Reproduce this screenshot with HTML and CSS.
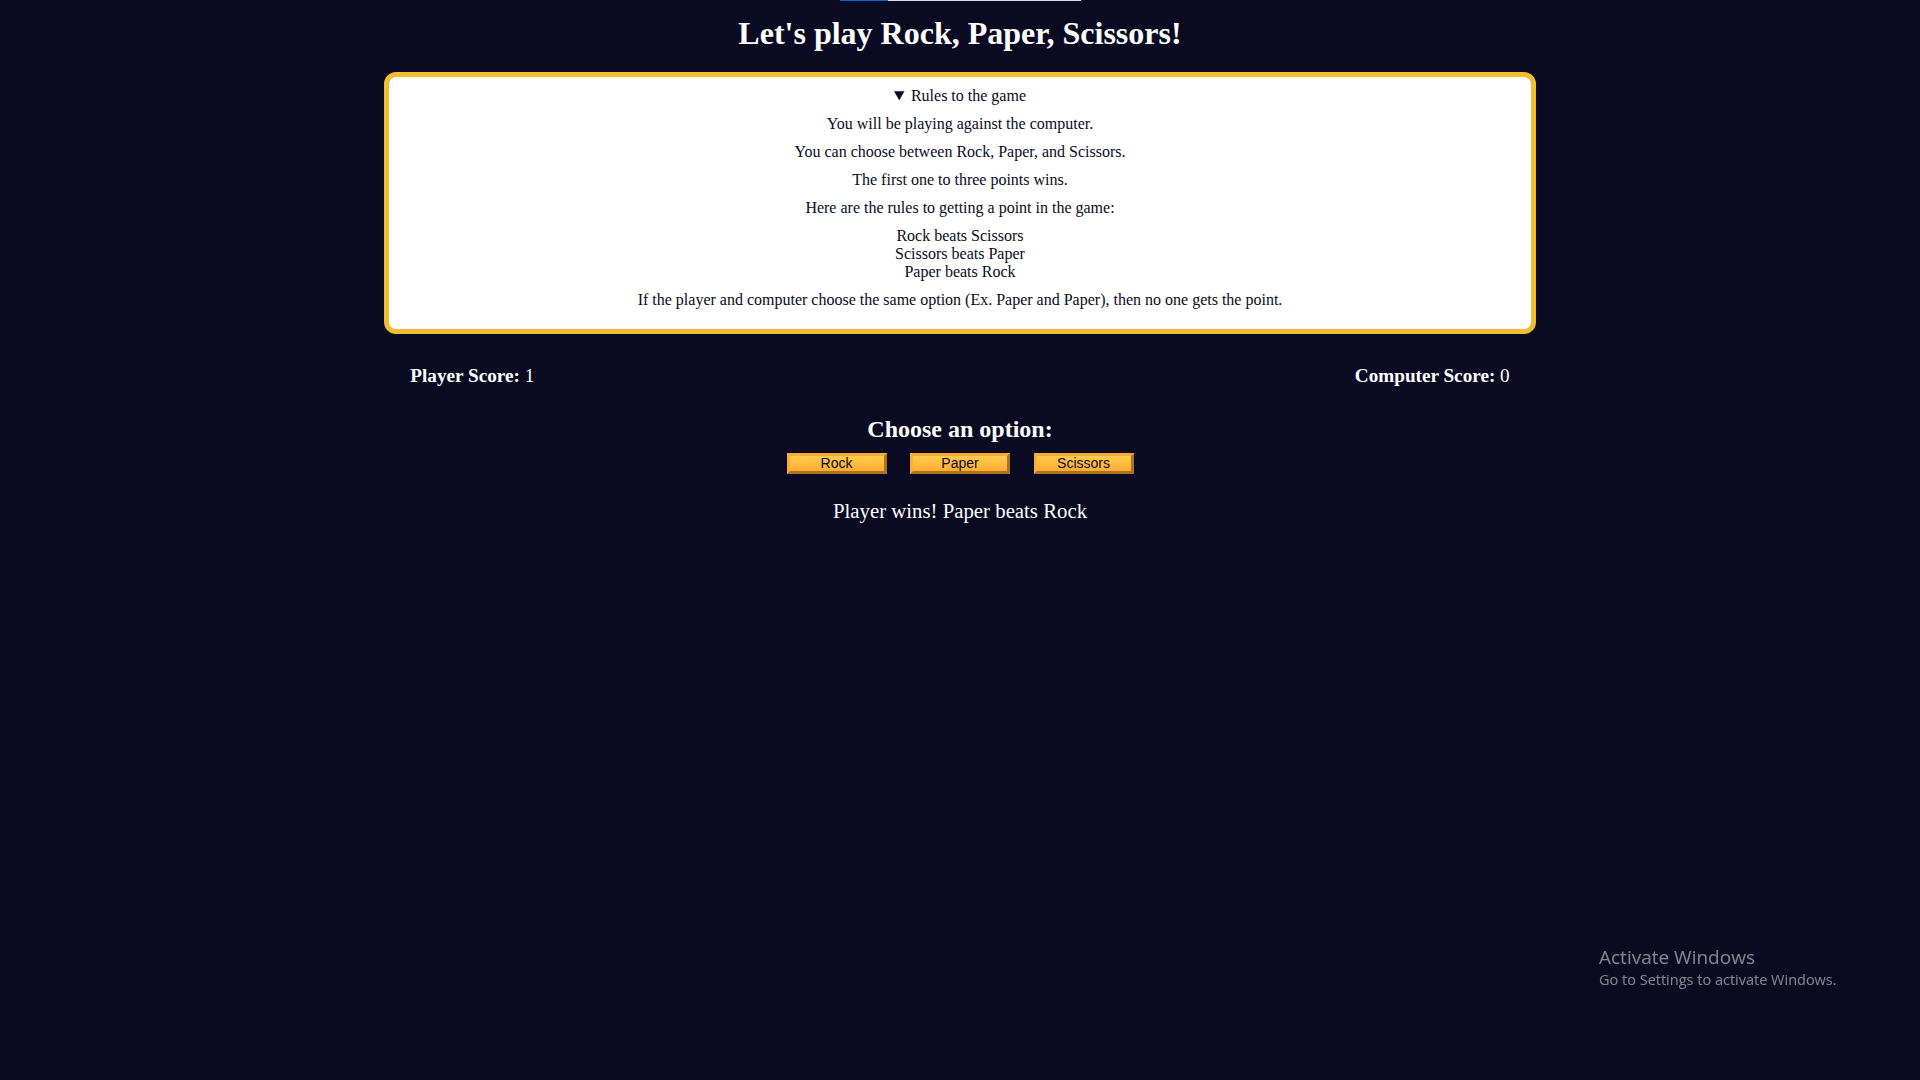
FILE: index.html
```html
<!DOCTYPE html>
<html lang="en">
<head>
<meta charset="UTF-8">
<title>Rock, Paper, Scissors</title>
<link rel="stylesheet" href="styles.css">
</head>
<body>
<div class="top-bar"><span class="top-bar-fill"></span><span class="top-bar-rest"></span></div>
<h1 class="title">Let's play Rock, Paper, Scissors!</h1>
<main>
  <details class="rules-container" open>
    <summary>Rules to the game</summary>
    <p>You will be playing against the computer.</p>
    <p>You can choose between Rock, Paper, and Scissors.</p>
    <p>The first one to three points wins.</p>
    <p>Here are the rules to getting a point in the game:</p>
    <ul>
      <li>Rock beats Scissors</li>
      <li>Scissors beats Paper</li>
      <li>Paper beats Rock</li>
    </ul>
    <p>If the player and computer choose the same option (Ex. Paper and Paper), then no one gets the point.</p>
  </details>

  <div class="score-info-container">
    <strong class="score">Player Score: <span class="score-value">1</span></strong>
    <strong class="score">Computer Score: <span class="score-value">0</span></strong>
  </div>

  <section class="options-section">
    <h2 class="options-title">Choose an option:</h2>
    <div class="options-container">
      <button class="btn" type="button">Rock</button>
      <button class="btn" type="button">Paper</button>
      <button class="btn" type="button">Scissors</button>
    </div>
    <p class="results-msg">Player wins! Paper beats Rock</p>
  </section>
</main>
<div class="watermark">
  <div class="watermark-title">Activate Windows</div>
  <div class="watermark-sub">Go to Settings to activate Windows.</div>
</div>
</body>
</html>
```
FILE: styles.css
```css
*,
*::before,
*::after {
  box-sizing: border-box;
  margin: 0;
  padding: 0;
}

html, body {
  height: 100%;
}

body {
  background-color: #0a0a23;
  color: #ffffff;
  font-family: "Liberation Serif", "Times New Roman", serif;
  font-size: 16px;
}

.top-bar {
  position: absolute;
  top: 0;
  left: 840px;
  width: 241px;
  height: 1px;
  display: flex;
}

.top-bar-fill {
  width: 48px;
  background-color: #0a66cc;
}

.top-bar-rest {
  flex: 1;
  background-color: #dcdcdc;
}

.title {
  text-align: center;
  font-size: 32px;
  font-weight: bold;
  margin: 15px 0 20px;
}

.rules-container {
  width: 60%;
  margin: 0 auto;
  padding: 10px 0;
  border: 5px solid #f1be32;
  border-radius: 12px;
  background-color: #ffffff;
  color: #0a0a23;
  text-align: center;
}

.rules-container summary {
  cursor: pointer;
}

.rules-container p {
  margin: 10px 0;
}

.rules-container ul {
  list-style-type: none;
}

.score-info-container {
  display: flex;
  justify-content: space-around;
  margin: 31px 0 29px;
  font-size: 1.2rem;
}

.score {
  font-weight: bold;
}

.score-value {
  font-weight: normal;
}

.options-section {
  text-align: center;
}

.options-title {
  font-size: 24px;
  font-weight: bold;
}

.options-container {
  font-size: 14px;
  line-height: 1;
}

.btn {
  cursor: pointer;
  width: 100px;
  margin: 10px;
  padding: 0;
  color: #0a0a23;
  font-family: "Liberation Sans", Arial, sans-serif;
  font-size: 14px;
  line-height: 15px;
  background-color: #feac32;
  background-image: linear-gradient(#fecc4c, #ffac33);
  border: 3px outset #feac32;
}

.results-msg {
  font-size: 1.3rem;
  margin-top: 15px;
}

.watermark {
  position: fixed;
  left: 1599px;
  top: 945px;
  color: rgba(255, 255, 255, 0.5);
  font-family: "Open Sans", "Noto Sans", sans-serif;
}

.watermark-title {
  font-size: 19px;
  line-height: 25px;
}

.watermark-sub {
  font-size: 14.5px;
  line-height: 20px;
}
```
